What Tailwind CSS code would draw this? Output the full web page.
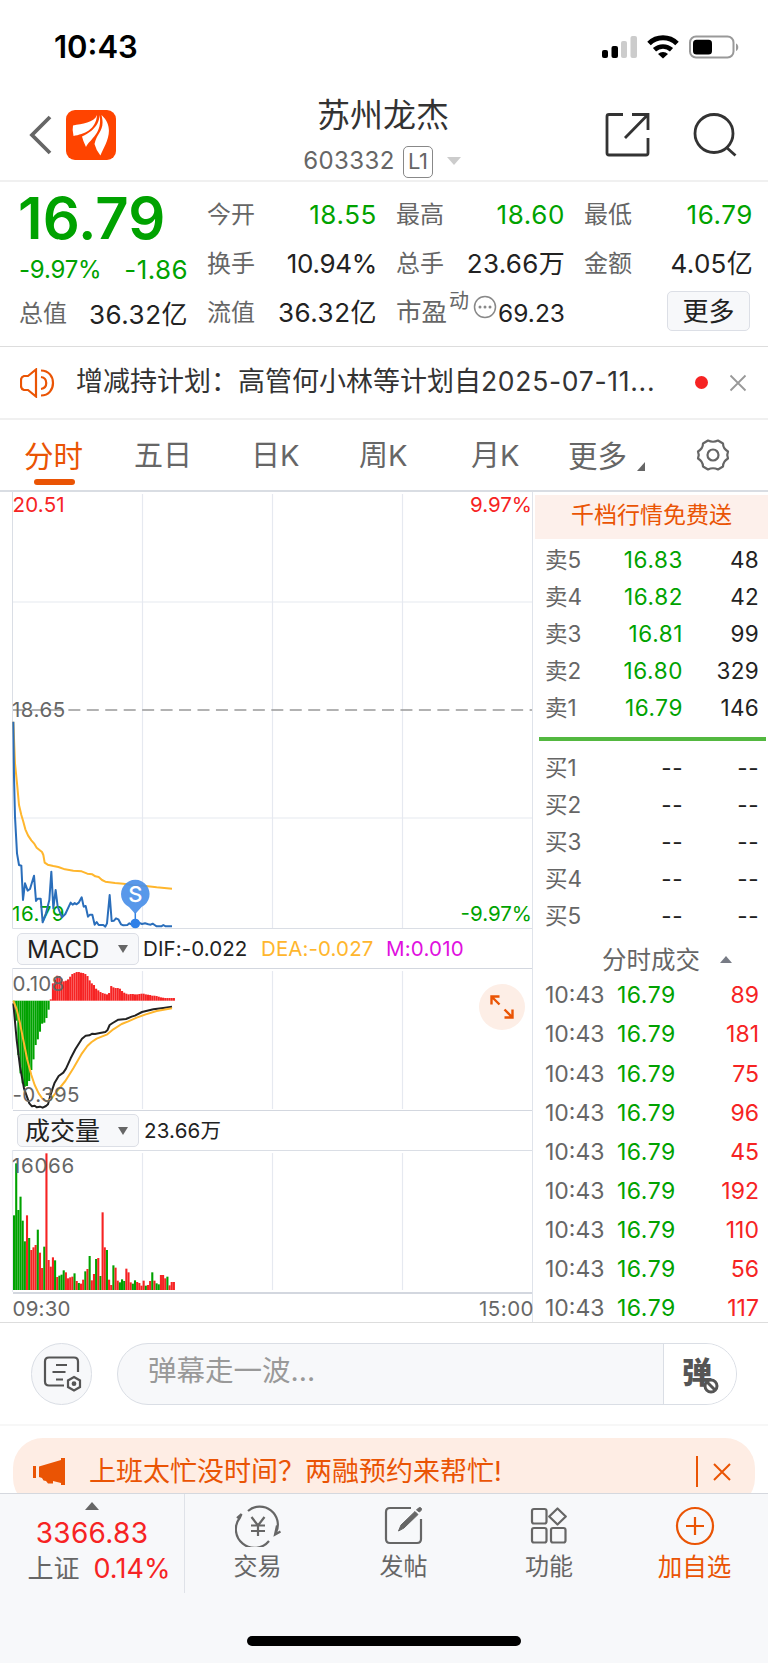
<!DOCTYPE html>
<html lang="zh-CN">
<head>
  <meta charset="UTF-8">
  <meta name="viewport" content="width=device-width, initial-scale=1.0">
  <title>苏州龙杰 603332</title>
  <script src="https://cdn.jsdelivr.net/npm/@tailwindcss/browser@4"></script>
  <style>
    body { font-family: Inter, "Noto Sans CJK SC", sans-serif; }
  </style>
</head>
<body class="w-[768px] h-[1663px] overflow-hidden bg-white text-[#222]">
  <!-- Status bar -->
  <div class="h-[90px] pl-[54px] pr-[29px] pt-1 flex items-center justify-between text-black">
    <span class="text-[31px] font-semibold">10:43</span>
    <svg width="138" height="24" viewBox="601 35 138 24" fill="none">
      <rect x="602" y="50" width="6" height="8" rx="2" fill="#000"/>
      <rect x="611.5" y="46" width="6.5" height="12" rx="2" fill="#000"/>
      <rect x="621" y="41" width="6" height="17" rx="2" fill="#ccc"/>
      <rect x="630.5" y="36" width="6.5" height="22" rx="2" fill="#ccc"/>
      <path d="M649 43.500a20 20 0 0 1 28 0" stroke="#000" stroke-width="5"/>
      <path d="M654.500 49.800a12.500 12.500 0 0 1 17 0" stroke="#000" stroke-width="4.600"/>
      <path d="M658 54a7.500 7.500 0 0 1 10 0L663 58.500z" fill="#000"/>
      <rect x="690" y="36.500" width="43.500" height="21" rx="6" stroke="#999" stroke-width="2"/>
      <rect x="693" y="39.800" width="19" height="14.800" rx="3.500" fill="#000"/>
      <path d="M736 43.500c3 1 3 6.500 0 7.500z" fill="#999"/>
    </svg>
  </div>

  <!-- Header -->
  <header class="h-[92px] border-b-2 border-[#f0f0f0] pl-7 pr-[30px] flex justify-between">
    <div class="w-[180px] flex items-start pt-5">
      <svg class="mt-[5px]" width="26" height="40" viewBox="0 0 26 40" fill="none" stroke="#666" stroke-width="3.800"><path d="M22 2 4 20 22 38"/></svg>
      <svg class="ml-3" width="50" height="50" viewBox="0 0 50 50">
        <rect width="50" height="50" rx="9" fill="#ff4400"/>
        <path fill="#fff" d="M31 5C28 13 16 13.500 7 15.500Q6 20 7.500 26C18 24 30 20 31 5Z"/>
        <path fill="#fff" d="M33.500 5C33.500 18 21 24 16 26.500Q17 31 20 37C24 29 37 23 33.500 5Z"/>
        <path fill="#fff" d="M35.500 5C39.500 21 31 22 28.500 34Q30 40 34.400 45.500C38 36 51 19 35.500 5Z"/>
      </svg>
    </div>
    <div class="flex flex-col items-center">
      <h1 class="text-[33px] leading-[46px] mt-[2px] font-normal text-[#333]">苏州龙杰</h1>
      <div class="flex items-center h-[34px] mt-[6px] ml-[-2px] text-[24px] text-[#666]">
        <span class="tracking-[0.4px]">603332</span>
        <span class="ml-2 mt-0.5 w-[30px] h-8 rounded-[5px] border-[1.5px] border-[#888] text-[22px] leading-[29px] text-center tracking-[-0.5px]">L1</span>
        <svg class="ml-3.5" width="14" height="8"><path d="M0 0h14L7 8z" fill="#ccc"/></svg>
      </div>
    </div>
    <div class="w-[180px] flex items-start justify-end pt-[21px]">
      <svg width="134" height="48" viewBox="604 111 134 48" fill="none" stroke="#333" stroke-width="2.800">
        <path d="M623 114.500H609q-2 0-2 2V153q0 2 2 2h37q2 0 2-2V138"/>
        <path d="M632 114.500h16V130M647 115.500 625 138"/>
        <circle cx="714" cy="133.500" r="19"/><path d="M726 147l9.500 8.500"/>
      </svg>
    </div>
  </header>

  <!-- Quote -->
  <section class="h-[165px] border-b border-[#ddd] relative flex text-[26px] pl-[19px] pr-[15px]">
    <div class="w-[169px]">
      <div class="text-[58px] leading-[64px] mt-1 h-[66px] font-semibold text-[#00a200] tracking-[0.1px] -ml-px">16.79</div>
      <div class="flex justify-between text-[24px] leading-9 text-[#00a200] tracking-[-0.2px]"><span>-9.97%</span><span class="text-[26px] tracking-[0.4px]">-1.86</span></div>
      <div class="flex justify-between items-center h-12 mt-0.5"><span class="text-[24px] text-[#666]">总值</span><span class="tracking-[0.5px]">36.32亿</span></div>
    </div>
    <div class="w-[170px] ml-[19px] pt-2">
      <div class="flex justify-between items-center h-[49px]"><span class="text-[24px] text-[#666]">今开</span><span class="text-[#00a200] tracking-[0.6px]">18.55</span></div>
      <div class="flex justify-between items-center h-[49px]"><span class="text-[24px] text-[#666]">换手</span><span class="tracking-[-0.3px]">10.94%</span></div>
      <div class="flex justify-between items-center h-[49px]"><span class="text-[24px] text-[#666]">流值</span><span class="tracking-[0.5px]">36.32亿</span></div>
    </div>
    <div class="w-[169px] ml-[19px] pt-2">
      <div class="flex justify-between items-center h-[49px]"><span class="text-[24px] text-[#666]">最高</span><span class="text-[#00a200] tracking-[0.6px]">18.60</span></div>
      <div class="flex justify-between items-center h-[49px]"><span class="text-[24px] text-[#666]">总手</span><span class="tracking-[0.3px]">23.66万</span></div>
      <div class="flex items-center h-[49px] text-[#666]">
        <span class="text-[25.5px]">市盈</span><span class="text-[20px] mb-6 ml-0.5">动</span>
        <svg class="ml-1 mb-3 shrink-0" width="24" height="24" viewBox="0 0 24 24" fill="#888"><circle cx="12" cy="12" r="10.500" fill="none" stroke="#888" stroke-width="1.500"/><circle cx="7" cy="12" r="1.500"/><circle cx="12" cy="12" r="1.500"/><circle cx="17" cy="12" r="1.500"/></svg>
        <span class="ml-auto text-[24.5px] mt-0.5 text-[#222]">69.23</span>
      </div>
    </div>
    <div class="w-[169px] ml-[19px] pt-2">
      <div class="flex justify-between items-center h-[49px]"><span class="text-[24px] text-[#666]">最低</span><span class="text-[#00a200] tracking-[0.6px]">16.79</span></div>
      <div class="flex justify-between items-center h-[49px]"><span class="text-[24px] text-[#666]">金额</span><span class="tracking-[0.3px]">4.05亿</span></div>
      <button class="block ml-auto mr-[3px] mt-[3px] w-[83px] h-10 rounded-[5px] border border-[#dcdfe6] bg-[#f7f8fa] text-[26px] leading-[39px]">更多</button>
    </div>
  </section>

  <!-- Notice -->
  <section class="h-[73px] border-b-2 border-[#f0f0f0] flex items-center pl-5 pr-[21px] text-[#333]">
    <svg width="36" height="30" viewBox="0 0 36 30" fill="none" stroke="#ea5404" stroke-width="2.200"><path d="M16 1.500V28.500L8 22H4q-3-1-3-4v-6q0-3 3-4h4zM21 2.500c16 0 16 25 0 25M21 9c7 1 7 11 0 12"/></svg>
    <span class="ml-5 w-[590px] text-[27px] whitespace-nowrap">增减持计划：高管何小林等计划自<span class="text-[26.5px] tracking-[0.7px]">2025-07-11...</span></span>
    <span class="ml-auto w-[13px] h-[13px] rounded-full bg-[#f62323]"></span>
    <svg class="ml-[21px]" width="18" height="18" stroke="#999" stroke-width="1.800"><path d="M1.500 1.500l15 15M16.500 1.500l-15 15"/></svg>
  </section>

  <!-- Period tabs -->
  <nav class="h-[72px] border-b-2 border-[#d9dde3] relative flex items-center text-[29px] text-[#666] pl-6 pt-0.5">
    <span class="w-[110px] text-[29.5px] text-[#ea5404]">分时</span>
    <span class="w-[117px]">五日</span>
    <span class="w-[108px]">日K</span>
    <span class="w-[112px]">周K</span>
    <span class="w-[97px]">月K</span>
    <span class="text-[29.5px]">更多</span>
    <svg class="ml-[10px] mt-5" width="8" height="9"><path d="M8 0v9H0z" fill="#666"/></svg>
    <svg class="ml-[50px] mb-0.5" width="36" height="36" viewBox="0 0 36 36" fill="none" stroke="#666" stroke-width="2.200" stroke-linejoin="round"><circle cx="18" cy="18" r="5.500"/><path d="M13 3.500Q18 6 23 3.500L28 6.500Q28 11.500 33 14.500Q31.500 18 33 21.500Q28 24.500 28 29.500L23 32.500Q18 30 13 32.500L8 29.500Q8 24.500 3 21.500Q4.500 18 3 14.500Q8 11.500 8 6.500Z"/></svg>
    <div class="absolute left-[34px] top-[59px] w-[41px] h-1.5 rounded-full bg-[#ea5404]"></div>
  </nav>

  <!-- Charts and order book -->
  <main class="h-[831px] border-b border-[#ddd] flex overflow-hidden">
    <div class="w-[533px] h-full border-r border-[#dfe3ea]">
      <!-- Price -->
      <svg class="block" width="532" height="437" viewBox="0 492 532 437" font-size="20.500">
        <g stroke="#e6e9f0" stroke-width="1.200"><path d="M142.500 494V928M272.500 494V928M402.500 494V928M13 602H532M13 818H532"/></g>
        <path d="M12.500 492V928.500H532" stroke="#dadee5" fill="none"/>
        <path d="M13 710H532" stroke="#999" stroke-width="1.700" stroke-dasharray="12 6.450"/>
        <text x="12.5" y="512" fill="#f62323" letter-spacing=".2">20.51</text>
        <text x="532" y="512" fill="#f62323" text-anchor="end">9.97%</text>
        <text x="12" y="716.5" fill="#666" letter-spacing=".5">18.65</text>
        <text x="12" y="921" fill="#00a200" letter-spacing=".6">16.79</text>
        <text x="532" y="921" fill="#00a200" text-anchor="end">-9.97%</text>
        <g transform="translate(0 710) scale(.33333)" fill="none" stroke-width="6" stroke-linejoin="round">
          <polyline stroke="#ffb62d" points="40,35 45,160 52,230 57,285 64,315 70,335 76,358 84,376 94,391 102,400 110,413 126,426 130,435 134,458 143,464 160,468 175,471 195,478 220,482 245,484 262,491 277,493 286,499 296,501 306,510 316,515 345,519 370,521 400,526 430,527 470,532 516,536"/>
          <polyline stroke="#2a6ebb" points="40,35 42,200 45,320 51,430 57,465 64,467 69,570 75,520 83,542 90,537 102,497 108,573 113,566 122,566 128,637 138,610 148,570 154,485 160,595 167,540 173,590 186,622 196,612 212,578 218,584 224,579 229,583 236,578 245,562 251,590 257,588 264,620 270,614 277,614 284,644 290,636 296,645 310,645 316,650 321,640 329,555 335,633 342,632 348,625 355,628 363,643 370,646 382,645 388,640 394,643 405,645 416,638 426,642 435,640 445,643 452,644 458,641 464,645 470,649 484,649 490,645 497,649 516,649"/>
        </g>
        <path d="M135.300 912V922" stroke="#2f80e0" stroke-width="1.500"/>
        <circle cx="135.300" cy="923.500" r="4.800" fill="#2f80e8"/>
        <path d="M135.300 914L129 907A14.300 14.300 0 1 1 141.600 907Z" fill="#4a8fe8" fill-opacity=".92"/>
        <text x="135.300" y="901.500" fill="#fff" text-anchor="middle" font-size="22" font-weight="500">S</text>
      </svg>
      <!-- MACD -->
      <div class="h-[39px] pl-[17px] pt-px flex items-center text-[20.5px] whitespace-nowrap">
        <div class="w-[122px] h-8 rounded-[5px] border border-[#dcdfe6] bg-[#f7f8fa] pl-[9px] pr-2.5 flex items-center justify-between text-[24px]"><span class="mt-px">MACD</span><svg width="10" height="8"><path d="M0 0h10L5 8z" fill="#666"/></svg></div>
        <span class="ml-1 w-[118px] tracking-[0.1px]">DIF:-0.022</span>
        <span class="w-[125px] text-[#ffb62d] tracking-[0.1px]">DEA:-0.027</span>
        <span class="text-[#e010e0] tracking-[0.2px]">M:0.010</span>
      </div>
      <div class="relative h-[143px]">
        <svg class="block" width="532" height="143" viewBox="0 968 532 143" font-size="20.500">
          <path d="M142.500 971V1109M272.500 971V1109M402.500 971V1109" stroke="#e6e9f0" stroke-width="1.200"/>
          <path d="M13 968.500H532M13 1110.500H532" stroke="#d3d7df" stroke-width="1.200"/><path d="M12.500 968V1109" stroke="#e6e9f0"/>
          <g id="macd-bars"></g>
          <g transform="translate(0 920) scale(.33333)" fill="none" stroke-width="6" stroke-linejoin="round">
            <polyline stroke="#222" points="40,250 50,360 60,440 72,505 88,550 96,559 104,557 110,562 120,560 128,563 138,558 144,553 150,530 158,505 164,488 176,468 190,458 198,446 212,415 226,388 246,356 257,347 268,346 277,341 285,342 300,339 316,336 322,331 329,315 338,309 355,299 378,297 395,290 405,287 426,276 460,268 490,264 516,260"/>
            <polyline stroke="#ffb62d" points="40,242 50,268 60,310 72,370 82,420 94,465 104,495 116,520 128,537 140,544 150,540 160,528 170,515 196,483 220,445 246,400 262,378 275,366 290,356 322,343 340,328 365,312 385,304 410,293 435,284 470,273 516,265"/>
          </g>
          <text x="12.5" y="991" fill="#666" letter-spacing=".3">0.108</text>
          <text x="12.5" y="1102" fill="#666" letter-spacing=".4">-0.395</text>
        </svg>
        <button class="absolute right-[7px] top-4 w-[46px] h-[46px] rounded-full bg-[#fdeee6] flex items-center justify-center">
          <svg width="24" height="24" viewBox="0 0 24 24" fill="none" stroke="#ea5404" stroke-width="2.400"><path d="M1.500 9.500V1.500h8M1.500 1.500l8 8M22.500 14.500v8h-8M22.500 22.500l-8-8"/></svg>
        </button>
      </div>
      <!-- Volume -->
      <div class="h-[39px] pl-[17px] flex items-center text-[20.5px]">
        <div class="w-[122px] h-[33px] rounded-[5px] border border-[#dcdfe6] bg-[#f7f8fa] pl-[7px] pr-2.5 flex items-center justify-between text-[25px]"><span class="mt-0.5">成交量</span><svg width="10" height="8"><path d="M0 0h10L5 8z" fill="#666"/></svg></div>
        <span class="ml-[5px] mt-0.5 tracking-[0.2px]">23.66万</span>
      </div>
      <svg class="block overflow-visible" width="532" height="172" viewBox="0 1150 532 172" font-size="20.500">
        <path d="M142.500 1153V1290M272.500 1153V1290M402.500 1153V1290M12.500 1150V1292" stroke="#e6e9f0" stroke-width="1.200"/>
        <path d="M13 1150.500H532" stroke="#dadee5"/><path d="M13 1293H532" stroke="#d3d7df" stroke-width="2"/>
        <g id="vol-bars"></g>
        <text x="12" y="1173" fill="#666" letter-spacing=".7">16066</text>
        <text x="12.5" y="1316" fill="#666" letter-spacing=".2">09:30</text>
        <text x="534" y="1316" fill="#666" text-anchor="end" letter-spacing=".5">15:00</text>
      </svg>
    </div>

    <div class="flex-1 pt-[3px]">
      <div class="ml-0.5 h-11 bg-[#fdf0eb] text-center text-[23px] leading-[41px] text-[#ea5404]">千档行情免费送</div>
      <div id="asks" class="mt-[2px] pl-3 pr-[9px] text-[22.5px]"></div>
      <div class="ml-1.5 mr-0.5 mt-[11px] h-1 bg-[#53b840]"></div>
      <div id="bids" class="mt-2 pl-3 pr-[9px] text-[22.5px]"></div>
      <div class="mt-[7px] h-[36px] pl-[69px] flex items-center text-[24.5px] text-[#666]"><span class="mt-0.5">分时成交</span><svg class="ml-5 mt-px" width="12" height="7"><path d="M6 0l6 7H0z" fill="#777b85"/></svg></div>
      <div id="trades" class="-mt-px pl-3 pr-[9px] text-[23px]"></div>
    </div>
  </main>

  <!-- Comment bar -->
  <section class="h-[103px] border-b-2 border-[#f7f7f7] pl-[31px] pr-[31px] pt-5 flex justify-between">
    <button class="w-[61px] h-[62px] rounded-full border border-[#dadee5] bg-[#f7f8fa] flex items-center justify-center">
      <svg width="40" height="36" viewBox="42 1357 40 36" fill="none" stroke="#555" stroke-width="2.200"><path d="M64 1386.500H49q-4 0-4-4v-20q0-4 4-4h25q4 0 4 4V1373M56 1366h11M52.500 1373h13M56 1380.500h7"/><path d="M74 1378l6 3.500v6.500l-6 3.500-6-3.500v-6.500z"/><circle cx="74" cy="1384.700" r="1.300" fill="#555"/></svg>
    </button>
    <div class="w-[620px] h-[62px] rounded-full border border-[#dadee5] bg-[#f7f8fa] flex overflow-hidden">
      <span class="flex-1 pl-[30px] text-[28.5px] leading-[54px] text-[#999]">弹幕走一波...</span>
      <div class="w-[73px] border-l border-[#dadee5] bg-white pl-[18px] relative text-[30px] leading-[57px] font-black text-[#555]">弹
        <svg class="absolute left-[38px] top-[33px]" width="18" height="18" viewBox="0 0 18 18" fill="#fff" stroke="#555" stroke-width="3"><circle cx="9" cy="9" r="6"/><path d="M5 5l8 8"/></svg>
      </div>
    </div>
  </section>

  <!-- Promo -->
  <section class="h-[67px] px-[13px] pt-3 overflow-hidden">
    <div class="h-[70px] rounded-[30px] bg-[#feede4] pl-5 pr-6 flex items-start text-[#ea5404]">
      <svg class="mt-[20px]" width="32" height="28" viewBox="0 0 32 28" fill="#ea5404"><path d="M0 8h3v12H0zM6 8.500L28 2V0h4v27h-4v-2l-8-2v2.500h-5L13 23l-2.500-.5L9 20 6 19z"/></svg>
      <span class="ml-6 text-[27px] leading-[67px]">上班太忙没时间？两融预约来帮忙!</span>
      <div class="ml-auto mt-[18px] w-0.5 h-[31px] bg-[#ea5404]"></div>
      <svg class="ml-[15px] mt-[25px]" width="18" height="18" stroke="#ea5404" stroke-width="2"><path d="M1 1l16 16M17 1L1 17"/></svg>
    </div>
  </section>

  <!-- Bottom bar -->
  <footer class="h-[170px] border-t border-[#d5d8de] bg-[#f7f8fa] relative">
    <div class="flex h-[99px] text-[24px] leading-8 text-[#666]">
      <div class="w-[185px] border-r border-[#dfe2e8] flex flex-col items-center pt-2">
        <svg width="14" height="8"><path d="M7 0l7 8H0z" fill="#666"/></svg>
        <span class="mt-[7px] text-[28px] leading-8 text-[#f62323] tracking-[0.3px]">3366.83</span>
        <div class="mt-0.5 ml-3.5 flex items-center gap-3.5 leading-9 whitespace-nowrap"><span class="text-[26px]">上证</span><span class="text-[27px] text-[#f62323] tracking-[0.1px]">0.14%</span></div>
      </div>
      <div class="w-[145px] flex flex-col items-center pt-[11px]">
        <svg width="46" height="42" viewBox="234 1505 46 42" fill="none" stroke="#666" stroke-width="2.200"><path d="M247 1511A18 18 0 0 1 275 1532.500M236 1518l4.500-4-1.500 3.500A18 18 0 0 0 268 1541M279.500 1531.500l-5.500 3 2-9"/><path d="M250.500 1517l6.500 8.500 6.500-8.500M250 1525.500h14M250 1531h14M257 1525.500V1536"/></svg>
        <span class="mt-1">交易</span>
      </div>
      <div class="w-[147px] flex flex-col items-center pt-[11px]">
        <svg width="40" height="42" viewBox="384 1505 40 42" fill="none" stroke="#666" stroke-width="2.200"><path d="M411 1508H390q-4 0-4 4v27q0 4 4 4h27q4 0 4-4V1519"/><path d="M398.500 1531L401 1525l14-13.500 3 3L404 1528zM416.500 1510l2-2q1.500-1 2.500 0t0 2.500l-1.500 1.500z" fill="#666" stroke-width="1"/></svg>
        <span class="mt-1">发帖</span>
      </div>
      <div class="w-[144px] flex flex-col items-center pt-[11px]">
        <svg width="38" height="42" viewBox="531 1505 38 42" fill="none" stroke="#666" stroke-width="2.200"><rect x="533" y="1509" width="14.500" height="14.500" rx="2"/><rect x="533" y="1528" width="14.500" height="14.500" rx="2"/><rect x="552" y="1528" width="14.500" height="14.500" rx="2"/><path d="M558.500 1508.500l8.300 8-8.300 8-8.300-8z" stroke-linejoin="round"/></svg>
        <span class="mt-1">功能</span>
      </div>
      <div class="flex-1 flex flex-col items-center pt-[11px] text-[#ea5404]">
        <svg width="40" height="42" viewBox="675 1505 40 42" fill="none" stroke="#ea5404" stroke-width="2.200"><circle cx="695" cy="1526" r="18"/><path d="M686 1526h18M695 1517v18"/></svg>
        <span class="mt-1 text-[24.5px]">加自选</span>
      </div>
    </div>
    <div class="mx-auto mt-[43px] w-[274px] h-[10px] rounded-full bg-black"></div>
  </footer>

  <script>
    const asks = [['卖5', '16.83', 48], ['卖4', '16.82', 42], ['卖3', '16.81', 99], ['卖2', '16.80', 329], ['卖1', '16.79', 146]];
    const bids = ['买1', '买2', '买3', '买4', '买5'];
    const trades = [89, 181, 75, 96, 45, 192, 110, 56, 117];

    document.getElementById('asks').innerHTML = asks.map(([n, p, v]) =>
      `<div class="flex h-[37px] items-center"><span class="w-[60px] text-[#666]">${n}</span><span class="w-[78px] text-right text-[#00a200] tracking-[0.6px]">${p}</span><span class="flex-1 text-right tracking-[0.3px]">${v}</span></div>`).join('');
    document.getElementById('bids').innerHTML = bids.map(n =>
      `<div class="flex h-[37px] items-center"><span class="w-[60px] text-[#666]">${n}</span><span class="w-[78px] text-right tracking-[0.5px]">--</span><span class="flex-1 text-right tracking-[0.5px]">--</span></div>`).join('');
    document.getElementById('trades').innerHTML = trades.map(v =>
      `<div class="flex h-[39.15px] items-center"><span class="w-[72px] text-[#666]">10:43</span><span class="text-[#00a200] tracking-[0.5px]">16.79</span><span class="flex-1 text-right text-[#f62323]">${v}</span></div>`).join('');

    const RED = '#f62323', GREEN = '#00a200', STEP = 2.16;
    const bar = (i, y, h, c) => `<rect x="${13 + i * STEP}" y="${y}" width="2.1" height="${h}" fill="${c}"/>`;

    // positive values above the zero line, thirds of a pixel
    const macd = [-8, -60, -163, -218, -248, -258, -256, -241, -208, -176, -133, -116, -93, -69, -66, -52, -27, 4, 52, 64, 75, 74, 66, 58, 60, 64, 72, 80, 83, 86, 86, 84, 83, 80, 74, 61, 52, 47, 36, 31, 26, 23, 21, 19, 23, 44, 40, 38, 38, 36, 29, 24, 21, 19, 20, 20, 19, 19, 20, 21, 21, 19, 18, 17, 15, 15, 14, 12, 10, 9, 8, 8, 8, 8, 8];
    document.getElementById('macd-bars').innerHTML = macd.map((v, i) =>
      bar(i, v > 0 ? 1000.7 - v / 3 : 1000.7, Math.abs(v) / 3, v > 0 ? RED : GREEN)).join('');

    const vol = [224, 380, 240, 280, 208, 146, 224, 156, 120, 128, 135, 181, 112, 66, 130, 410, 90, 70, 98, 89, 39, 43, 46, 59, 53, 35, 38, 40, 50, 27, 21, 19, 31, 56, 63, 102, 29, 48, 93, 96, 42, 233, 128, 120, 31, 15, 74, 67, 28, 23, 32, 27, 64, 53, 23, 19, 29, 24, 21, 13, 28, 13, 15, 27, 53, 28, 20, 17, 45, 45, 35, 40, 14, 24, 24];
    const dir = 'ggggggrgrrrgrrgrrrrgrgggrrrrgrgrrgrgrrgrgrrgrrgrrgggrrrggrrrrgrrgrggrrrgrrr';
    document.getElementById('vol-bars').innerHTML = vol.map((v, i) =>
      bar(i, 1290 - v / 3, v / 3, dir[i] === 'r' ? RED : GREEN)).join('');
  </script>
</body>
</html>
